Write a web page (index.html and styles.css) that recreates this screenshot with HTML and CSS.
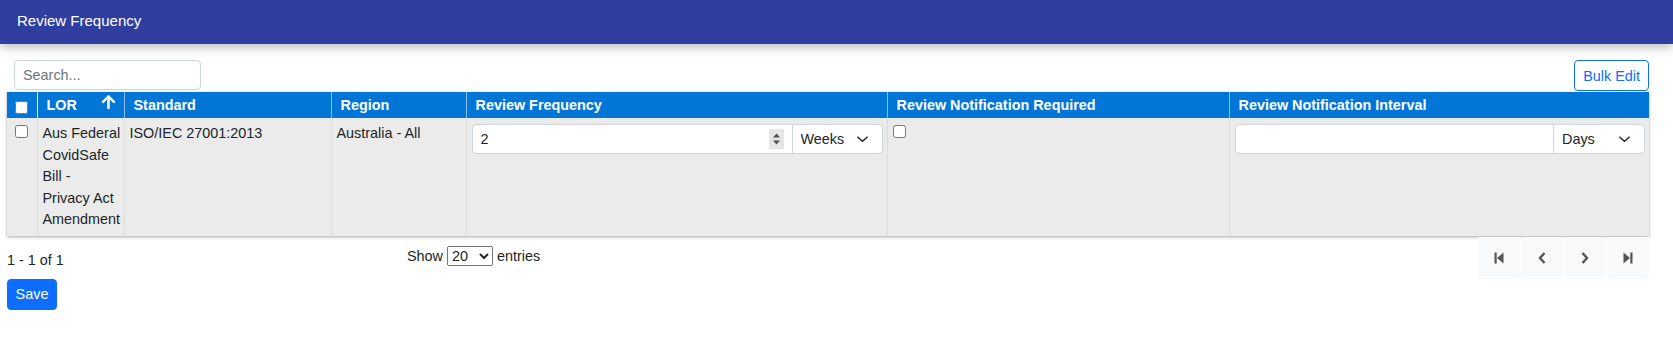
FILE: index.html
```html
<!DOCTYPE html>
<html lang="en">
<head>
    <meta charset="UTF-8">
    <meta name="viewport" content="width=device-width, initial-scale=1.0">
    <title>Review Frequency</title>
    <link rel="stylesheet" href="styles.css">
</head>
<body>

    <div class="top-bar">
        <span class="top-title">Review Frequency</span>
    </div>

    <div class="page">
        <div class="toolbar">
            <input class="search" type="text" placeholder="Search...">
            <button class="btn-outline">Bulk Edit</button>
        </div>

        <table class="grid">
            <colgroup>
                <col class="c-check">
                <col class="c-lor">
                <col class="c-std">
                <col class="c-region">
                <col class="c-freq">
                <col class="c-req">
                <col class="c-interval">
            </colgroup>
            <thead>
                <tr>
                    <th class="check-cell"><input type="checkbox"></th>
                    <th class="sortable">LOR
                        <svg class="sort-icon" viewBox="0 0 448 480"><path d="M34.9 289.5l-22.2-22.2c-9.4-9.4-9.4-24.6 0-33.9L207 39c9.4-9.4 24.6-9.4 33.9 0l194.3 194.3c9.4 9.4 9.4 24.6 0 33.9L413 289.4c-9.5 9.5-25 9.3-34.3-.4L264 168.6V456c0 13.3-10.7 24-24 24h-32c-13.3 0-24-10.7-24-24V168.6L69.2 289.1c-9.3 9.8-24.8 10-34.3.4z" fill="#fff"/></svg>
                    </th>
                    <th>Standard</th>
                    <th>Region</th>
                    <th>Review Frequency</th>
                    <th>Review Notification Required</th>
                    <th>Review Notification Interval</th>
                </tr>
            </thead>
            <tbody>
                <tr>
                    <td class="check-cell"><input type="checkbox"></td>
                    <td class="lor-cell">Aus Federal CovidSafe Bill - Privacy Act Amendment</td>
                    <td>ISO/IEC 27001:2013</td>
                    <td>Australia - All</td>
                    <td>
                        <div class="input-group">
                            <div class="num-field">
                                <input class="num-input" type="text" value="2">
                                <span class="spin">
                                    <svg width="9" height="14" viewBox="0 0 9 14"><path d="M1 5.5 L4.5 1.5 L8 5.5 Z M1 8.5 L4.5 12.5 L8 8.5 Z" fill="#505050"/></svg>
                                </span>
                            </div>
                            <select class="unit-select unit-weeks">
                                <option>Weeks</option>
                                <option>Days</option>
                                <option>Months</option>
                            </select>
                        </div>
                    </td>
                    <td><input class="row-check" type="checkbox"></td>
                    <td>
                        <div class="input-group">
                            <div class="num-field">
                                <input class="num-input" type="text" value="">
                            </div>
                            <select class="unit-select unit-days">
                                <option>Days</option>
                                <option>Weeks</option>
                                <option>Months</option>
                            </select>
                        </div>
                    </td>
                </tr>
            </tbody>
        </table>

        <div class="footer">
            <div class="count">1 - 1 of 1</div>
            <div class="page-size">
                Show
                <select class="size-select">
                    <option>20</option>
                    <option>50</option>
                    <option>100</option>
                </select>
                entries
            </div>
            <div class="pager">
                <button class="pager-btn" title="First">
                    <svg width="10" height="12" viewBox="0 0 10 12"><rect x="0.5" y="0.5" width="2.2" height="11" fill="#555"/><path d="M9.5 0.5 L3 6 L9.5 11.5 Z" fill="#555"/></svg>
                </button>
                <button class="pager-btn" title="Previous">
                    <svg width="8" height="12" viewBox="0 0 8 12"><path d="M6.5 1 L2 6 L6.5 11" fill="none" stroke="#555" stroke-width="2.4"/></svg>
                </button>
                <button class="pager-btn" title="Next">
                    <svg width="8" height="12" viewBox="0 0 8 12"><path d="M1.5 1 L6 6 L1.5 11" fill="none" stroke="#555" stroke-width="2.4"/></svg>
                </button>
                <button class="pager-btn" title="Last">
                    <svg width="10" height="12" viewBox="0 0 10 12"><path d="M0.5 0.5 L7 6 L0.5 11.5 Z" fill="#555"/><rect x="7.3" y="0.5" width="2.2" height="11" fill="#555"/></svg>
                </button>
            </div>
        </div>

        <button class="btn-primary">Save</button>
    </div>

</body>
</html>
```

FILE: styles.css
```css
* {
    margin: 0;
    padding: 0;
    box-sizing: border-box;
    font-family: 'Liberation Sans', Arial, sans-serif;
}

body {
    background: #fff;
    color: #212529;
    font-size: 14.4px;
}

.top-bar {
    height: 44px;
    background: #303f9f;
    padding: 12px 0 0 17px;
    box-shadow: 0 3px 10px rgba(0, 0, 0, 0.28);
}

.top-title {
    color: #fff;
    font-size: 15px;
    line-height: 18px;
}

.page {
    width: 1649px;
    padding-left: 7px;
}

.toolbar {
    display: flex;
    justify-content: space-between;
    align-items: flex-start;
    margin-top: 16px;
    height: 32px;
}

.search {
    margin-left: 7px;
    width: 187px;
    height: 30px;
    padding: 0 8px;
    border: 1px solid #ced4da;
    border-radius: 4px;
    font-size: 14.4px;
    color: #212529;
}

.search::placeholder {
    color: #6c757d;
}

.btn-outline {
    height: 31px;
    padding: 0 8px;
    background: #fff;
    color: #0d6efd;
    border: 1px solid #0d6efd;
    border-radius: 4px;
    font-size: 14.4px;
}

.grid {
    width: 1642px;
    table-layout: fixed;
    border-collapse: collapse;
    box-shadow: 0 1px 3px rgba(0, 0, 0, 0.35);
}

.c-check { width: 30px; }
.c-lor { width: 87px; }
.c-std { width: 207px; }
.c-region { width: 135px; }
.c-freq { width: 421px; }
.c-req { width: 342px; }
.c-interval { width: 420px; }

.grid th {
    height: 26px;
    padding: 0 9px;
    background: #0276d7;
    color: #fff;
    font-weight: bold;
    font-size: 14.4px;
    text-align: left;
    border-left: 1px solid rgba(255, 255, 255, 0.55);
    white-space: nowrap;
}

.grid th:first-child,
.grid td:first-child {
    border-left: none;
}

.sortable {
    position: relative;
}

.sort-icon {
    position: absolute;
    top: 2px;
    right: 8px;
    width: 15px;
    height: 15px;
}

.grid td {
    padding: 5px 4px 5px 5px;
    background: #ebebeb;
    vertical-align: top;
    line-height: 21.5px;
    border-left: 1px solid #dcdcdc;
}

.grid td.lor-cell {
    padding-right: 2.5px;
}

.grid .check-cell {
    padding: 0;
    text-align: center;
}

.grid th.check-cell input {
    margin: 5px 0 0 0;
    vertical-align: top;
}

.grid td.check-cell input {
    margin: 7px 0 0 0;
}

input[type="checkbox"] {
    width: 13px;
    height: 13px;
}

.row-check {
    margin: 2px 0 0 0;
    vertical-align: top;
}

.input-group {
    display: flex;
    height: 30px;
    margin-top: 1px;
}

.num-field {
    flex: 1;
    display: flex;
    align-items: center;
    background: #fff;
    border: 1px solid #ced4da;
    border-radius: 4px 0 0 4px;
    padding-right: 8px;
}

.num-input {
    flex: 1;
    min-width: 0;
    border: none;
    outline: none;
    padding-left: 8px;
    font-size: 14.4px;
    color: #212529;
    background: transparent;
}

.spin {
    display: flex;
    align-items: center;
    justify-content: center;
    width: 15px;
    height: 20px;
    background: #e6e6e6;
}

.unit-select {
    appearance: none;
    -webkit-appearance: none;
    height: 30px;
    margin-left: -1px;
    padding: 0 8px;
    font-size: 14.4px;
    color: #212529;
    background-color: #fff;
    background-image: url("data:image/svg+xml,%3csvg xmlns='http://www.w3.org/2000/svg' viewBox='0 0 14 8'%3e%3cpath fill='none' stroke='%23222' stroke-width='1.5' d='M1.5 1.5l5.5 5 5.5-5'/%3e%3c/svg%3e");
    background-repeat: no-repeat;
    background-position: right 13px center;
    background-size: 13px 8px;
    border: 1px solid #ced4da;
    border-radius: 0 4px 4px 0;
}

.unit-weeks { width: 91px; }
.unit-days { width: 92px; }

.footer {
    display: flex;
    align-items: center;
    height: 42px;
    margin-top: 1px;
}

.count {
    width: 400px;
    padding-top: 4px;
}

.page-size {
    display: flex;
    align-items: center;
    gap: 4px;
    margin-top: -4px;
}

.size-select {
    width: 46px;
    height: 20px;
    font-size: 14.4px;
    color: #212529;
}

.pager {
    display: flex;
    gap: 1px;
    margin-left: auto;
    height: 42px;
}

.pager-btn {
    width: 42px;
    height: 42px;
    display: flex;
    align-items: center;
    justify-content: center;
    background: #f8f9fa;
    border: none;
    border-radius: 0 0 4px 4px;
}

.btn-primary {
    height: 31px;
    width: 50px;
    background: #0d6efd;
    color: #fff;
    border: 1px solid #0d6efd;
    border-radius: 4px;
    font-size: 14.4px;
}
```
